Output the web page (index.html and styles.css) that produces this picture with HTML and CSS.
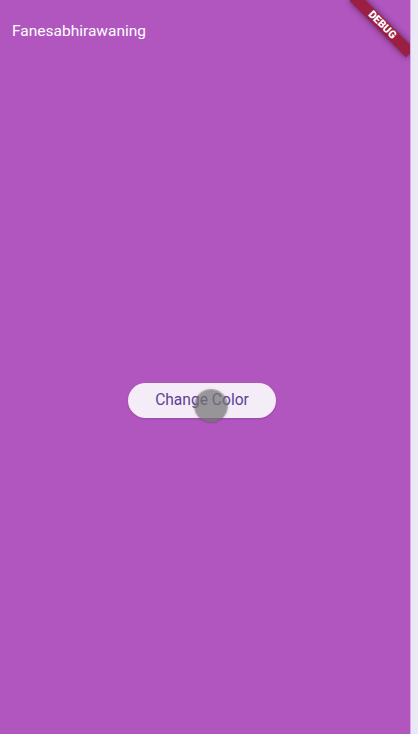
FILE: index.html
```html
<!DOCTYPE html>
<html>
<head>
<meta charset="utf-8">
<link rel="stylesheet" href="styles.css">
</head>
<body>
<div class="frame">
  <div class="app">
    <div class="appbar">Fanesabhirawaning</div>
    <div class="center">
      <button class="btn">Change Color</button>
      <span class="touch"></span>
    </div>
    <div class="banner">DEBUG</div>
  </div>
  <div class="edge"></div>
</div>
</body>
</html>
```
FILE: styles.css
```css
html, body {
  margin: 0;
  padding: 0;
  width: 418px;
  height: 734px;
  overflow: hidden;
  font-family: Roboto, "Noto Sans", sans-serif;
}
.frame {
  display: flex;
  height: 734px;
}
.app {
  position: relative;
  width: 410px;
  height: 734px;
  background: #b155bf;
  overflow: hidden;
  display: flex;
  flex-direction: column;
}
.appbar {
  color: #ffffff;
  font-size: 15.5px;
  padding: 22px 12px 0;
  height: 34px;
  line-height: 18px;
}
.center {
  position: relative;
  flex: 1;
  display: flex;
  align-items: center;
  justify-content: center;
  padding-top: 10px;
}
.btn {
  width: 148px;
  height: 35px;
  border: none;
  border-radius: 18px;
  background: #f4ecf6;
  color: #5f3f98;
  font-family: Roboto, sans-serif;
  font-size: 15.6px;
  padding: 0;
  margin-right: 6px;
  box-shadow: 0 1px 2px rgba(0,0,0,0.15);
}
.touch {
  position: absolute;
  left: 195px;
  top: 334px;
  width: 32px;
  height: 32px;
  border-radius: 50%;
  background: rgba(115,115,115,0.72);
  box-shadow: 0 0 0 1px rgba(90,90,90,0.35), 0 0 3px rgba(60,60,60,0.4);
}
.banner {
  position: absolute;
  left: 342px;
  top: 19px;
  width: 80px;
  height: 12px;
  line-height: 12px;
  background: rgba(150,20,40,0.82);
  color: #fff;
  font-size: 10.8px;
  font-weight: 900;
  text-align: center;
  transform: rotate(45deg);
  box-shadow: 0 0 6px rgba(0,0,0,0.5);
}
.edge {
  width: 8px;
  height: 734px;
  background: #e8eaf6;
  border-left: 1px solid #dca8e6;
  box-sizing: border-box;
}
```
